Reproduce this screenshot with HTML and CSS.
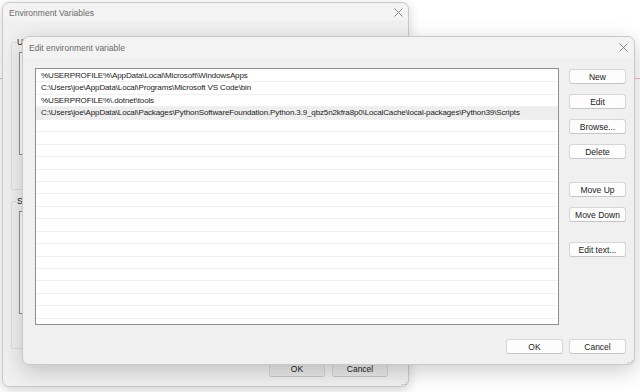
FILE: index.html
```html
<!DOCTYPE html>
<html lang="en">

<head>
    <meta charset="UTF-8">
    <meta name="viewport" content="width=device-width, initial-scale=1.0">
    <title>Edit environment variable</title>
    <link rel="stylesheet" href="styles.css">
</head>

<body>
    <div class="desktop">
        <!-- app behind the dialogs -->
        <div class="backdrop-line"></div>

        <!-- Environment Variables (inactive) -->
        <div class="win back">
            <div class="titlebar">
                <span class="title">Environment Variables</span>
                <svg class="close" width="9" height="9" viewBox="0 0 9 9"><path d="M0.5 0.5 L8.5 8.5 M8.5 0.5 L0.5 8.5" /></svg>
            </div>
            <div class="back-body">
                <fieldset class="group">
                    <legend>User variables for joe</legend>
                    <div class="mini-list"></div>
                </fieldset>
                <fieldset class="group">
                    <legend>System variables</legend>
                    <div class="mini-list"></div>
                </fieldset>
                <div class="footer">
                    <button class="btn back-btn">OK</button>
                    <button class="btn back-btn">Cancel</button>
                </div>
            </div>
            <span class="grip">⠠⠴</span>
        </div>

        <!-- Edit environment variable (active) -->
        <div class="win front">
            <div class="titlebar">
                <span class="title">Edit environment variable</span>
                <svg class="close" width="9" height="9" viewBox="0 0 9 9"><path d="M0.5 0.5 L8.5 8.5 M8.5 0.5 L0.5 8.5" /></svg>
            </div>
            <div class="body">
                <div class="paths">
                    <div class="row">%USERPROFILE%\AppData\Local\Microsoft\WindowsApps</div>
                    <div class="row">C:\Users\joe\AppData\Local\Programs\Microsoft VS Code\bin</div>
                    <div class="row">%USERPROFILE%\.dotnet\tools</div>
                    <div class="row selected">C:\Users\joe\AppData\Local\Packages\PythonSoftwareFoundation.Python.3.9_qbz5n2kfra8p0\LocalCache\local-packages\Python39\Scripts</div>
                    <div class="row"></div>
                    <div class="row"></div>
                    <div class="row"></div>
                    <div class="row"></div>
                    <div class="row"></div>
                    <div class="row"></div>
                    <div class="row"></div>
                    <div class="row"></div>
                    <div class="row"></div>
                    <div class="row"></div>
                    <div class="row"></div>
                    <div class="row"></div>
                    <div class="row"></div>
                    <div class="row"></div>
                    <div class="row"></div>
                    <div class="row"></div>
                    <div class="row"></div>
                </div>
                <div class="actions">
                    <button class="btn">New</button>
                    <button class="btn">Edit</button>
                    <button class="btn">Browse...</button>
                    <button class="btn">Delete</button>
                    <button class="btn move-up">Move Up</button>
                    <button class="btn">Move Down</button>
                    <button class="btn edit-text">Edit text...</button>
                </div>
            </div>
            <div class="footer">
                <button class="btn">OK</button>
                <button class="btn">Cancel</button>
            </div>
            <span class="grip">⠠⠴</span>
        </div>
    </div>
</body>

</html>
```

FILE: styles.css
```css
* {
    box-sizing: border-box;
}

body {
    margin: 0;
    background: #ffffff;
    font-family: "Liberation Sans", Arial, sans-serif;
    color: #1b1b1b;
}

.desktop {
    position: relative;
    width: 640px;
    height: 392px;
    overflow: hidden;
    background: #ffffff;
}

.backdrop-line {
    position: absolute;
    left: 0;
    right: 0;
    top: 78px;
    height: 1px;
    background: #f2b9b2;
}

/* windows */
.win {
    position: absolute;
    display: flex;
    flex-direction: column;
    background: #f0f0f0;
    border: 1px solid #c9c9c9;
    border-radius: 7px;
}

.back {
    left: 2px;
    top: 2px;
    width: 407px;
    height: 385px;
    box-shadow: 0 3px 12px rgba(0, 0, 0, 0.18);
}

.front {
    left: 22px;
    top: 36px;
    width: 613px;
    height: 329px;
    box-shadow: 0 6px 22px rgba(0, 0, 0, 0.2);
}

.titlebar {
    display: flex;
    flex-shrink: 0;
    align-items: center;
    justify-content: space-between;
    border-radius: 7px 7px 0 0;
    background: #f3f3f3;
}

.back .titlebar {
    height: 18px;
    padding: 1px 5px 0 6px;
}

.front .titlebar {
    height: 21px;
    padding: 0 6px 0 6px;
}

.title {
    font-size: 8.5px;
    color: #6a6a6a;
}

.close {
    fill: none;
    stroke: #7a7a7a;
    stroke-width: 0.9;
}

.grip {
    position: absolute;
    right: 1px;
    bottom: 0;
    font-size: 6px;
    color: #9a9a9a;
    line-height: 1;
}

/* front dialog */
.body {
    display: flex;
    gap: 10px;
    padding: 10px 8px 0 12px;
}

.paths {
    width: 524px;
    height: 257px;
    padding-top: 1px;
    border: 1px solid #8f8f8f;
    background: #ffffff;
    overflow: hidden;
}

.row {
    height: 12.45px;
    line-height: 12px;
    padding-left: 5px;
    font-size: 8px;
    letter-spacing: -0.13px;
    white-space: nowrap;
    border-bottom: 1px solid #f1f1f1;
}

.row.selected {
    background: #eeeeee;
}

.actions {
    display: flex;
    flex-direction: column;
    gap: 10px;
    padding-top: 1px;
}

.btn {
    width: 57px;
    height: 15px;
    padding: 0;
    font-family: inherit;
    font-size: 8.5px;
    color: #1b1b1b;
    background: #fdfdfd;
    border: 1px solid #d6d6d6;
    border-bottom-color: #c6c6c6;
    border-radius: 3px;
}

.move-up {
    margin-top: 13px;
}

.edit-text {
    margin-top: 10px;
}

.footer {
    display: flex;
    justify-content: flex-end;
    gap: 6px;
    margin-top: 14px;
    padding-right: 8px;
}

/* back dialog */
.back-body {
    display: flex;
    flex-direction: column;
    gap: 6px;
    padding: 16px 10px 0 8px;
}

.group {
    flex-shrink: 0;
    margin: 0;
    height: 153px;
    padding: 0 7px 0 7px;
    border: 1px solid #dcdcdc;
    border-radius: 2px;
}

.group legend {
    padding: 0 1px;
    margin-left: -3px;
    font-size: 8.5px;
    line-height: 10px;
    color: #1b1b1b;
}

.mini-list {
    margin-top: 5px;
    height: 103px;
    border: 1px solid #8c8c8c;
    background: #ffffff;
}

.back .footer {
    gap: 7px;
    margin-top: 6px;
    padding-right: 10px;
}

.back-btn {
    width: 56px;
    height: 16px;
    background: #e9e9e9;
}
```
